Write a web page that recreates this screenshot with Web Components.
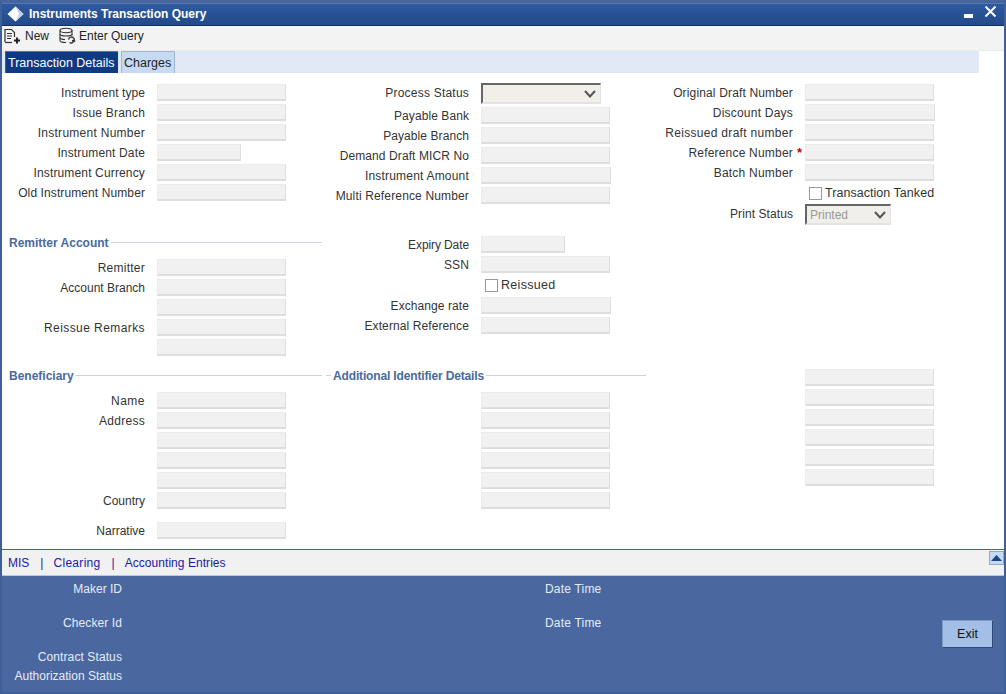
<!DOCTYPE html>
<html>
<head>
<meta charset="utf-8">
<title>Instruments Transaction Query</title>
<style>
  html, body { margin: 0; padding: 0; background: #fff; }
  body { font: 12px "Liberation Sans", Arial, sans-serif; color: #333; }
</style>
</head>
<body>
<app-window>
  <title-bar slot="title" heading="Instruments Transaction Query"></title-bar>
  <tool-bar slot="tools"></tool-bar>
  <tab-strip slot="tabs"></tab-strip>

  <form-column slot="col1">
    <form-field label="Instrument type" style="--ls:.08px"></form-field>
    <form-field label="Issue Branch" style="--ls:.2px"></form-field>
    <form-field label="Instrument Number" style="--ls:.27px"></form-field>
    <form-field label="Instrument Date" size="84"></form-field>
    <form-field label="Instrument Currency"></form-field>
    <form-field label="Old Instrument Number" style="--ls:.1px"></form-field>
    <section-head style="margin-top:30px;width:320px" heading="Remitter Account"></section-head>
    <form-field label="Remitter" style="margin-top:7px;--ls:.25px"></form-field>
    <form-field label="Account Branch" style="--ls:0px"></form-field>
    <form-field></form-field>
    <form-field label="Reissue Remarks" style="--ls:.42px"></form-field>
    <form-field></form-field>
    <section-head style="margin-top:8px;width:320px" heading="Beneficiary"></section-head>
    <form-field label="Name" style="margin-top:7px;--ls:.5px"></form-field>
    <form-field label="Address" style="--ls:.3px"></form-field>
    <form-field></form-field>
    <form-field></form-field>
    <form-field></form-field>
    <form-field label="Country" style="--ls:0px"></form-field>
    <form-field label="Narrative" style="margin-top:10px;--ls:0px"></form-field>
  </form-column>

  <form-column slot="col2">
    <select-field label="Process Status" size="120" style="--ls:.22px"></select-field>
    <form-field label="Payable Bank" style="margin-top:2px;--ls:.08px"></form-field>
    <form-field label="Payable Branch" style="--ls:.08px"></form-field>
    <form-field label="Demand Draft MICR No" style="--ls:.1px"></form-field>
    <form-field label="Instrument Amount" size="130" style="--ls:.2px"></form-field>
    <form-field label="Multi Reference Number"></form-field>
    <form-field label="Expiry Date" size="84" style="margin-top:29px;--ls:-.1px"></form-field>
    <form-field label="SSN"></form-field>
    <check-field label="Reissued" style="--ls:.3px"></check-field>
    <form-field label="Exchange rate" size="130" style="margin-top:1px;--ls:.08px"></form-field>
    <form-field label="External Reference" style="--ls:.1px"></form-field>
    <section-head lead style="margin-top:30px;width:320px" heading="Additional Identifier Details"></section-head>
    <form-field style="margin-top:7px"></form-field>
    <form-field></form-field>
    <form-field></form-field>
    <form-field></form-field>
    <form-field></form-field>
    <form-field></form-field>
  </form-column>

  <form-column slot="col3">
    <form-field label="Original Draft Number"></form-field>
    <form-field label="Discount Days" size="130" style="--ls:.22px"></form-field>
    <form-field label="Reissued draft number" style="--ls:.3px"></form-field>
    <form-field label="Reference Number" required style="--ls:.2px"></form-field>
    <form-field label="Batch Number" style="--ls:.22px"></form-field>
    <check-field label="Transaction Tanked" style="--ls:.04px"></check-field>
    <select-field label="Print Status" size="86" value="Printed" style="margin-top:1px;--ls:.08px"></select-field>
    <form-field style="margin-top:143px"></form-field>
    <form-field></form-field>
    <form-field></form-field>
    <form-field></form-field>
    <form-field></form-field>
    <form-field></form-field>
  </form-column>

  <link-bar slot="links"></link-bar>
  <audit-bar slot="audit"></audit-bar>
</app-window>

<script>
// outer frame of the dialog
class AppWindow extends HTMLElement {
  constructor() {
    super()
    this.attachShadow({mode: 'open'}).innerHTML = `
      <style>
      :host {
        display: flex;
        flex-direction: column;
        box-sizing: border-box;
        width: 1006px;
        height: 694px;
        border-left: 2px solid #3f5f98;
        border-right: 2px solid #3f5f98;
        border-top: 3px solid #46659c;
        border-bottom: 2px solid #3f5f98;
        background: #fff;
        overflow: hidden;
      }
      .form {
        flex: 1;
        display: grid;
        grid-template-columns: 324px 324px 1fr;
        padding-top: 10px;
        min-height: 0;
      }
      </style>
      <slot name="title"></slot>
      <slot name="tools"></slot>
      <slot name="tabs"></slot>
      <div class="form">
        <slot name="col1"></slot>
        <slot name="col2"></slot>
        <slot name="col3"></slot>
      </div>
      <slot name="links"></slot>
      <slot name="audit"></slot>
    `
  }
}

class TitleBar extends HTMLElement {
  constructor() {
    super()
    this.attachShadow({mode: 'open'}).innerHTML = `
      <style>
      :host {
        display: flex;
        align-items: center;
        height: 22px;
        background: linear-gradient(#2f5ba2, #234a8a);
        box-shadow: inset 0 1px #5676ad;
        border-bottom: 1px solid #14305f;
        color: #fff;
        font: bold 12px "Liberation Sans", Arial, sans-serif;
      }
      .logo { margin: 0 5px 0 5px; display: block; }
      .text { flex: 1; padding-bottom: 1px; }
      .ctl { display: block; }
      .min { margin-right: 12px; margin-top: 4px; }
      .close { margin-right: 8px; margin-top: -6px; }
      </style>
      <svg class="logo" width="17" height="16" viewBox="0 0 17 16"><path d="M8.500 .5 L16.500 8 L8.500 15.500 L.5 8 Z" fill="#fff"/><path d="M16.500 8 L8.500 15.500 L12 8 L8.500 .5 Z" fill="#c4d0e4"/></svg>
      <span class="text"></span>
      <svg class="ctl min" width="9" height="4" viewBox="0 0 9 4"><rect y="0" width="9" height="4" fill="#fff"/></svg>
      <svg class="ctl close" width="11" height="11" viewBox="0 0 11 11"><path d="M.5 .5 L10.500 10.500 M10.500 .5 L.5 10.500" stroke="#fff" stroke-width="2"/></svg>
    `
    this.shadowRoot.querySelector('.text').textContent = this.getAttribute('heading')
  }
}

class ToolBar extends HTMLElement {
  constructor() {
    super()
    this.attachShadow({mode: 'open'}).innerHTML = `
      <style>
      :host {
        display: flex;
        align-items: flex-start;
        box-sizing: content-box;
        height: 24px;
        background: #f3f3f3;
        border-bottom: 1px solid #ebebeb;
        color: #222;
        font: 12px "Liberation Sans", Arial, sans-serif;
      }
      span { display: flex; align-items: center; gap: 3px; height: 19px; }
      .new { margin-left: 2px; margin-right: 9px; }
      svg { display: block; }
      </style>
      <span class="new">
        <svg width="18" height="17" viewBox="0 0 18 17" fill="none" stroke="#333" stroke-width="1.200">
          <path d="M1 15V2.500h6.500l3 3V10"/>
          <path d="M3 6.500h5M3 9h5M3 11.500h4"/>
          <path d="M1 15.500h7"/>
          <path d="M13 10.500v6M10 13.500h6" stroke-width="2" stroke="#222"/>
        </svg>New
      </span>
      <span class="query">
        <svg width="18" height="17" viewBox="0 0 18 17" fill="none" stroke="#333" stroke-width="1.100">
          <ellipse cx="8" cy="3.500" rx="6" ry="2.200"/>
          <path d="M2 3.500v10c0 1.200 2.700 2 6 2"/>
          <path d="M14 3.500v5"/>
          <path d="M2 7c0 1.200 2.700 2 6 2s6-.8 6-2M2 10.500c0 1.200 2.700 2 5 2"/>
          <path d="M10.500 12.500a3 3 0 0 1 5.500-1l.5 2.500-2.500-.5M16 13a3 3 0 0 1-4.500 2.500" stroke-width="1.400"/>
        </svg>Enter Query
      </span>
    `
  }
}

class TabStrip extends HTMLElement {
  constructor() {
    super()
    this.attachShadow({mode: 'open'}).innerHTML = `
      <style>
      :host {
        display: flex;
        align-items: stretch;
        box-sizing: border-box;
        height: 22px;
        width: 977px;
        padding-left: 3px;
        background: #e1e8f5;
        font: 12.500px "Liberation Sans", Arial, sans-serif;
      }
      .tab {
        box-sizing: border-box;
        display: flex;
        align-items: center;
        padding: 0 2px;
      }
      .on {
        width: 113px;
        background: #0d3a80;
        color: #fff;
        border-top: 1px solid #c0524a;
        border-left: 1px solid #a0403a;
        padding-left: 2px;
      }
      .off {
        width: 54px;
        margin-left: 3px;
        background: #c7daf3;
        color: #222;
        border: 1px solid #9db5d6;
        border-bottom: 0;
      }
      </style>
      <div class="tab on">Transaction Details</div>
      <div class="tab off">Charges</div>
    `
  }
}

class FormColumn extends HTMLElement {
  constructor() {
    super()
    this.attachShadow({mode: 'open'}).innerHTML = `
      <style>
      :host { display: flex; flex-direction: column; align-items: flex-start; }
      </style>
      <slot></slot>
    `
  }
}

// label on the right of a 155px gutter, then a read-only box
const fieldStyle = `
  :host {
    display: grid;
    grid-template-columns: 143px 1fr;
    column-gap: 12px;
    align-items: center;
    height: 20px;
    color: #333;
    font: 12px "Liberation Sans", Arial, sans-serif;
  }
  .label { text-align: right; white-space: nowrap; position: relative; letter-spacing: var(--ls, .15px); }
  .req { position: absolute; left: 100%; margin-left: 4px; top: -1px; color: #c00; font-weight: bold; font-size: 13px; }
`

class FormField extends HTMLElement {
  constructor() {
    super()
    this.attachShadow({mode: 'open'}).innerHTML = `
      <style>
      ${fieldStyle}
      .box {
        box-sizing: border-box;
        align-self: start;
        margin-top: 1px;
        height: 17px;
        background: #f1f1f1;
        border: 1px solid #ececec;
        border-right-color: #dedede;
        border-bottom: 2px solid #dedede;
      }
      </style>
      <div class="label"></div>
      <div class="box"></div>
    `
    let label = this.shadowRoot.querySelector('.label')
    label.textContent = this.getAttribute('label') || ''
    if (this.hasAttribute('required')) {
      let star = document.createElement('span')
      star.className = 'req'
      star.textContent = '*'
      label.appendChild(star)
    }
    this.shadowRoot.querySelector('.box').style.width = (this.getAttribute('size') || 129) + 'px'
  }
}

class SelectField extends HTMLElement {
  constructor() {
    super()
    this.attachShadow({mode: 'open'}).innerHTML = `
      <style>
      ${fieldStyle}
      :host { height: 21px; }
      .label { margin-bottom: 2px; }
      .box {
        box-sizing: border-box;
        display: flex;
        align-items: center;
        justify-content: space-between;
        height: 21px;
        background: #f1efe9;
        border-top: 2px solid #666;
        border-left: 2px solid #666;
        border-right: 1px solid #e3e3e3;
        border-bottom: 2px solid #e3e3e3;
        padding: 0 4px 0 3px;
        color: #9a9a9a;
      }
      svg { display: block; }
      </style>
      <div class="label"></div>
      <div class="box">
        <span class="value"></span>
        <svg width="12" height="8" viewBox="0 0 12 8"><path d="M1 1 L6 6.500 L11 1" fill="none" stroke="#555" stroke-width="2"/></svg>
      </div>
    `
    this.shadowRoot.querySelector('.label').textContent = this.getAttribute('label') || ''
    this.shadowRoot.querySelector('.value').textContent = this.getAttribute('value') || ''
    this.shadowRoot.querySelector('.box').style.width = (this.getAttribute('size') || 120) + 'px'
  }
}

class CheckField extends HTMLElement {
  constructor() {
    super()
    this.attachShadow({mode: 'open'}).innerHTML = `
      <style>
      :host {
        display: flex;
        align-items: center;
        gap: 3px;
        height: 20px;
        padding-left: 159px;
        color: #333;
        font: 12.500px "Liberation Sans", Arial, sans-serif;
      }
      .text { letter-spacing: var(--ls, .1px); }
      i {
        box-sizing: border-box;
        display: block;
        width: 13px;
        height: 13px;
        background: #fff;
        border: 1px solid #9a9a9a;
      }
      </style>
      <i></i><span class="text"></span>
    `
    this.shadowRoot.querySelector('.text').textContent = this.getAttribute('label')
  }
}

class SectionHead extends HTMLElement {
  constructor() {
    super()
    this.attachShadow({mode: 'open'}).innerHTML = `
      <style>
      :host {
        display: flex;
        align-items: center;
        gap: 2px;
        height: 18px;
        padding-left: 7px;
        box-sizing: border-box;
        color: #4a6a9e;
        font: bold 12px "Liberation Sans", Arial, sans-serif;
      }
      :host([lead]) { padding-left: 0; letter-spacing: -.15px; }
      i { flex: 1; height: 1px; background: #c9d3e3; }
      .dash { display: none; flex: none; width: 5px; }
      :host([lead]) .dash { display: block; }
      b { font-weight: bold; white-space: nowrap; margin-top: 2px; }
      </style>
      <i class="dash"></i><b></b><i></i>
    `
    this.shadowRoot.querySelector('b').textContent = this.getAttribute('heading')
  }
}

class LinkBar extends HTMLElement {
  constructor() {
    super()
    this.attachShadow({mode: 'open'}).innerHTML = `
      <style>
      :host {
        display: flex;
        align-items: center;
        position: relative;
        box-sizing: border-box;
        height: 27px;
        padding-left: 6px;
        background: #f1f1f1;
        border-top: 1px solid #46659c;
        border-bottom: 1px solid #b9c6dc;
        color: #1a1aa8;
        font: 12px "Liberation Sans", Arial, sans-serif;
      }
      span { white-space: pre; }
      .up {
        position: absolute;
        right: 0;
        top: 1px;
        box-sizing: border-box;
        width: 15px;
        height: 14px;
        background: #c7daf3;
        border: 1px solid #8ea8cc;
        display: flex;
        align-items: center;
        justify-content: center;
      }
      svg { display: block; }
      </style>
      <span>MIS</span>
      <span style="margin-left:11px">|</span>
      <span style="margin-left:10px;letter-spacing:.3px">Clearing</span>
      <span style="margin-left:11px">|</span>
      <span style="margin-left:10px;letter-spacing:.05px">Accounting Entries</span>
      <div class="up"><svg width="11" height="6" viewBox="0 0 11 6"><path d="M5.500 0 L11 6 H0 Z" fill="#1f4585"/></svg></div>
    `
  }
}

class AuditBar extends HTMLElement {
  constructor() {
    super()
    this.attachShadow({mode: 'open'}).innerHTML = `
      <style>
      :host {
        display: grid;
        grid-template-columns: 120px 423px 57px 1fr;
        grid-template-rows: 34px 34px 19px 1fr;
        column-gap: 0;
        box-sizing: border-box;
        height: 116px;
        padding-top: 6px;
        background: #4a679f;
        color: #e6ecf6;
        font: 12px "Liberation Sans", Arial, sans-serif;
      }
      .l { grid-column: 1; text-align: right; white-space: nowrap; }
      .d { grid-column: 3; white-space: nowrap; letter-spacing: .2px; }
      .exit {
        grid-column: 4;
        grid-row: 2 / span 2;
        justify-self: end;
        align-self: start;
        margin: 4px 11px 0 0;
        box-sizing: border-box;
        width: 51px;
        height: 28px;
        display: flex;
        align-items: center;
        justify-content: center;
        background: #a3bfe6;
        border: 1px solid #7f9ac4;
        border-right-color: #2e4a78;
        border-bottom-color: #2e4a78;
        color: #111;
        font-size: 12.500px;
      }
      </style>
      <div class="l" style="grid-row:1">Maker ID</div>
      <div class="d" style="grid-row:1">Date Time</div>
      <div class="l" style="grid-row:2;letter-spacing:.1px">Checker Id</div>
      <div class="d" style="grid-row:2">Date Time</div>
      <div class="l" style="grid-row:3;letter-spacing:.1px">Contract Status</div>
      <div class="l" style="grid-row:4">Authorization Status</div>
      <div class="exit">Exit</div>
    `
  }
}

customElements.define('app-window', AppWindow)
customElements.define('title-bar', TitleBar)
customElements.define('tool-bar', ToolBar)
customElements.define('tab-strip', TabStrip)
customElements.define('form-column', FormColumn)
customElements.define('form-field', FormField)
customElements.define('select-field', SelectField)
customElements.define('check-field', CheckField)
customElements.define('section-head', SectionHead)
customElements.define('link-bar', LinkBar)
customElements.define('audit-bar', AuditBar)
</script>
</body>
</html>
